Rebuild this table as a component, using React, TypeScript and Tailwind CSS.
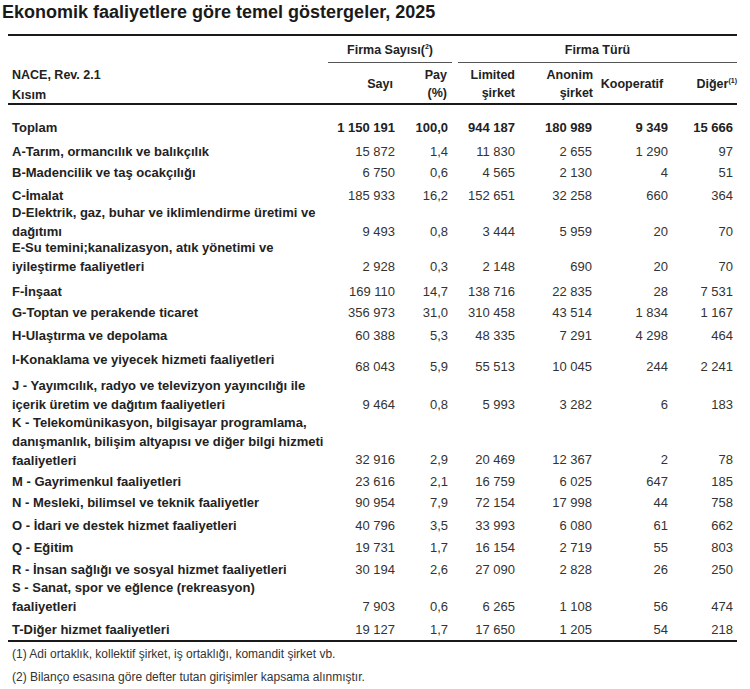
type Row = {
  l: string[];
  v: string[];
  h: string;
  n?: string;
  b?: boolean;
};

const rows: Row[] = [
  { l: ["Toplam"], v: ["1 150 191", "100,0", "944 187", "180 989", "9 349", "15 666"], h: "h-[24px]", b: true },
  { l: ["A-Tarım, ormancılık ve balıkçılık"], v: ["15 872", "1,4", "11 830", "2 655", "1 290", "97"], h: "h-[21px]" },
  { l: ["B-Madencilik ve taş ocakçılığı"], v: ["6 750", "0,6", "4 565", "2 130", "4", "51"], h: "h-[23px]" },
  { l: ["C-İmalat"], v: ["185 933", "16,2", "152 651", "32 258", "660", "364"], h: "h-[17px]" },
  {
    l: ["D-Elektrik, gaz, buhar ve iklimlendirme üretimi ve", "dağıtımı"],
    v: ["9 493", "0,8", "3 444", "5 959", "20", "70"],
    h: "h-[35px]",
    n: "pt-[19px]",
  },
  {
    l: ["E-Su temini;kanalizasyon, atık yönetimi ve", "iyileştirme faaliyetleri"],
    v: ["2 928", "0,3", "2 148", "690", "20", "70"],
    h: "h-[44px]",
    n: "pt-[19px]",
  },
  { l: ["F-İnşaat"], v: ["169 110", "14,7", "138 716", "22 835", "28", "7 531"], h: "h-[21px]" },
  { l: ["G-Toptan ve perakende ticaret"], v: ["356 973", "31,0", "310 458", "43 514", "1 834", "1 167"], h: "h-[23px]" },
  { l: ["H-Ulaştırma ve depolama"], v: ["60 388", "5,3", "48 335", "7 291", "4 298", "464"], h: "h-[24px]" },
  {
    l: ["I-Konaklama ve yiyecek hizmeti faaliyetleri"],
    v: ["68 043", "5,9", "55 513", "10 045", "244", "2 241"],
    h: "h-[26px]",
    n: "pt-[7px]",
  },
  {
    l: ["J - Yayımcılık, radyo ve televizyon yayıncılığı ile", "içerik üretim ve dağıtım faaliyetleri"],
    v: ["9 464", "0,8", "5 993", "3 282", "6", "183"],
    h: "h-[37px]",
    n: "pt-[19px]",
  },
  {
    l: [
      "K - Telekomünikasyon, bilgisayar programlama,",
      "danışmanlık, bilişim altyapısı ve diğer bilgi hizmeti",
      "faaliyetleri",
    ],
    v: ["32 916", "2,9", "20 469", "12 367", "2", "78"],
    h: "h-[59px]",
    n: "pt-[37px]",
  },
  { l: ["M - Gayrimenkul faaliyetleri"], v: ["23 616", "2,1", "16 759", "6 025", "647", "185"], h: "h-[21px]" },
  { l: ["N - Mesleki, bilimsel ve teknik faaliyetler"], v: ["90 954", "7,9", "72 154", "17 998", "44", "758"], h: "h-[23px]" },
  { l: ["O - İdari ve destek hizmet faaliyetleri"], v: ["40 796", "3,5", "33 993", "6 080", "61", "662"], h: "h-[22px]" },
  { l: ["Q - Eğitim"], v: ["19 731", "1,7", "16 154", "2 719", "55", "803"], h: "h-[22px]" },
  { l: ["R - İnsan sağlığı ve sosyal hizmet faaliyetleri"], v: ["30 194", "2,6", "27 090", "2 828", "26", "250"], h: "h-[18px]" },
  {
    l: ["S - Sanat, spor ve eğlence (rekreasyon)", "faaliyetleri"],
    v: ["7 903", "0,6", "6 265", "1 108", "56", "474"],
    h: "h-[42px]",
    n: "pt-[19px]",
  },
  { l: ["T-Diğer hizmet faaliyetleri"], v: ["19 127", "1,7", "17 650", "1 205", "54", "218"], h: "h-[20px]" },
];

const cols = "grid grid-cols-[322px_69px_53px_67px_77px_76px_65px]";

export default function App() {
  return (
    <div className="w-[750px] h-[689px] bg-white text-[#222] font-['Liberation_Sans',Arial,sans-serif]">
      <h1 className="pl-[2px] text-[18px] leading-[24px] font-bold text-[#1a1a1a]">
        Ekonomik faaliyetlere göre temel göstergeler, 2025
      </h1>

      <div className="ml-[8px] mt-[10px] w-[729px] border-t-2 border-[#1a1a1a]">
        {/* header */}
        <div className={`${cols} h-[27px] text-[12.5px] font-bold`}>
          <div />
          <div className="col-span-2 -ml-[2px] flex items-center justify-center border-b border-[#555] pt-[3px]">
            Firma Sayısı(<sup className="text-[7px]">2</sup>)
          </div>
          <div className="col-span-4 ml-[6px] flex items-center justify-center border-b border-[#555] pt-[3px]">
            Firma Türü
          </div>
        </div>
        <div className={`${cols} h-[42px] border-b-2 border-[#1a1a1a] text-[12.5px] font-bold`}>
          <div className="pl-1 pt-[2px] leading-[20px]">
            NACE, Rev. 2.1
            <br />
            Kısım
          </div>
          <div className="flex items-center justify-end pr-[6px]">Sayı</div>
          <div className="flex items-center justify-end pr-[5px] text-right leading-[18px]">
            Pay
            <br />
            (%)
          </div>
          <div className="flex items-center justify-end pr-1 text-right leading-[18px]">
            Limited
            <br />
            şirket
          </div>
          <div className="flex items-center justify-end pr-[3px] text-right leading-[18px]">
            Anonim
            <br />
            şirket
          </div>
          <div className="flex items-center justify-center pr-[4px]">Kooperatif</div>
          <div className="flex items-center justify-end">
            Diğer<sup className="text-[7px]">(1)</sup>
          </div>
        </div>

        {/* body */}
        <div className="border-b-2 border-[#1a1a1a] pt-[13px] text-[13px]">
          {rows.map((r) => (
            <div key={r.l[0]} className={`${cols} ${r.h}`}>
              <div className="whitespace-nowrap pl-1 font-bold leading-[19px]">
                {r.l.map((t, i) => (
                  <div key={i}>{t}</div>
                ))}
              </div>
              {r.v.map((x, i) => (
                <div
                  key={i}
                  className={`whitespace-nowrap pr-1 text-right leading-[19px] ${r.n ?? ""} ${
                    r.b ? "font-bold text-[#222]" : "text-[#333]"
                  }`}
                >
                  {x}
                </div>
              ))}
            </div>
          ))}
        </div>
      </div>

      <div className="pl-[12px] text-[12px] leading-[16px] text-[#333]">
        <p className="mt-[4px]">(1) Adi ortaklık, kollektif şirket, iş ortaklığı, komandit şirket vb.</p>
        <p className="mt-[7px]">(2) Bilanço esasına göre defter tutan girişimler kapsama alınmıştır.</p>
      </div>
    </div>
  );
}
